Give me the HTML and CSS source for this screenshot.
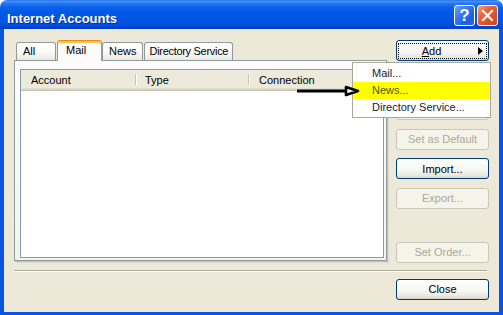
FILE: index.html
```html
<!DOCTYPE html>
<html lang="en">
<head>
    <meta charset="UTF-8">
    <title>Internet Accounts</title>
    <link rel="stylesheet" href="styles.css">
</head>
<body>

<div class="window">
    <div class="titlebar">
        <span class="title">Internet Accounts</span>
        <div class="caption-buttons">
            <span class="cap-btn cap-help">?</span>
            <span class="cap-btn cap-close">
                <svg width="19" height="19" viewBox="0 0 19 19">
                    <path d="M5 5 L14 14 M14 5 L5 14" stroke="#fff" stroke-width="2.2" stroke-linecap="square"/>
                </svg>
            </span>
        </div>
    </div>

    <div class="frame">
        <div class="main">
            <div class="tabarea">
                <div class="tabs">
                    <span class="tab">All</span>
                    <span class="tab active">Mail</span>
                    <span class="tab">News</span>
                    <span class="tab tab-dir">Directory Service</span>
                </div>
                <div class="panel">
                    <div class="listview">
                        <div class="list-header">
                            <span class="col col-account">Account</span>
                            <span class="col col-type">Type</span>
                            <span class="col col-conn">Connection</span>
                        </div>
                    </div>
                </div>
            </div>

            <div class="buttons">
                <button class="btn btn-add"><span class="focus"></span><span class="add-label"><u>A</u>dd</span><span class="tri"></span></button>
                <!-- Remove / Properties, hidden under the menu -->
                <button class="btn" disabled aria-label="Remove"></button>
                <button class="btn" disabled aria-label="Properties"></button>
                <button class="btn" disabled>Set as Default</button>
                <button class="btn">Import...</button>
                <button class="btn" disabled>Export...</button>
                <button class="btn btn-order" disabled>Set Order...</button>
            </div>
        </div>

        <div class="separator"></div>

        <div class="footer">
            <button class="btn">Close</button>
        </div>
    </div>

    <!-- popup menu of the Add button -->
    <div class="menu">
        <div class="menu-item">Mail...</div>
        <div class="menu-item highlight">News...</div>
        <div class="menu-item">Directory Service...</div>
    </div>

    <svg class="pointer" width="66" height="14" viewBox="0 0 66 14">
        <line x1="2" y1="7" x2="52" y2="7" stroke="#000" stroke-width="3"/>
        <polygon points="51,3 63,7 51,11" fill="#fff" stroke="#000" stroke-width="2.6" stroke-linejoin="round"/>
    </svg>
</div>

</body>
</html>
```

FILE: styles.css
```css
* {
    box-sizing: border-box;
}
body {
    margin: 0;
    background: #fff;
    font-family: "Liberation Sans", Arial, sans-serif;
    font-size: 11px;
    color: #000;
}
.window {
    position: relative;
    width: 503px;
    height: 315px;
    display: flex;
    flex-direction: column;
}
.titlebar {
    height: 29px;
    display: flex;
    align-items: flex-start;
    padding: 5px 5px 0 7px;
    border-radius: 7px 7px 0 0;
    background: linear-gradient(to bottom, #1a62e0 0, #4a94f8 1px, #2c7cf2 3px, #0a62ea 7px, #0056e6 14px, #0053e2 23px, #004ad6 26px, #003fc4 29px);
}
.title {
    flex: 1;
    align-self: center;
    padding-top: 2px;
    font-weight: bold;
    font-size: 13px;
    color: #fff;
    text-shadow: 1px 1px 0 #0a2a9a;
}
.caption-buttons {
    display: flex;
    gap: 2px;
}
.cap-btn {
    width: 21px;
    height: 21px;
    border: 1px solid #fff;
    border-radius: 3px;
    display: flex;
    align-items: center;
    justify-content: center;
    color: #fff;
}
.cap-help {
    background: linear-gradient(135deg, #6aa4fb 0%, #3a7cf2 35%, #1f5fe4 70%, #2a62dc 100%);
    font-weight: bold;
    font-size: 17px;
    line-height: 19px;
}
.cap-close {
    background: linear-gradient(135deg, #f4a080 0%, #e8643c 35%, #dc4e24 70%, #cc4824 100%);
}
.frame {
    flex: 1;
    background: #ece9d8;
    border: solid #0756e2;
    border-width: 0 4px 3px 4px;
    padding: 11px 10px 0 10px;
}
.main {
    display: flex;
    gap: 9px;
}
.tabarea {
    width: 373px;
}
.tabs {
    display: flex;
    align-items: flex-end;
    height: 20px;
    padding-left: 2px;
    position: relative;
    z-index: 1;
}
.tab {
    height: 18px;
    min-width: 40px;
    padding: 0 5px 0 6px;
    line-height: 16px;
    border: 1px solid #919b9c;
    border-bottom: none;
    border-radius: 3px 3px 0 0;
    background: linear-gradient(#fff, #fbfbfa 45%, #eae9e3);
}
.tab.active {
    height: 21px;
    min-width: 45px;
    margin: 0 0 -1px 1px;
    padding-left: 8px;
    line-height: 15px;
    border-top: 1px solid #e68b2c;
    box-shadow: inset 0 2px 0 #ffc83c;
    padding-top: 2px;
    background: #fcfcfe;
}
.tab-dir {
    margin-left: 1px;
    padding-left: 5px;
    padding-right: 4px;
    letter-spacing: -0.3px;
}
.panel {
    height: 201px;
    border: 1px solid #919b9c;
    background: linear-gradient(#fcfcfe, #f4f3ee);
    box-shadow: 1px 1px 0 #c4c1b4, 2px 2px 0 #dedbcf;
    padding: 8px 0 0 5px;
}
.listview {
    width: 364px;
    height: 189px;
    border: 1px solid #7f9db9;
    background: #fff;
}
.list-header {
    display: flex;
    height: 21px;
    background: linear-gradient(to bottom, #ebeadb 0, #ebeadb 18px, #e2decd 18px, #e2decd 19px, #d6d2c2 19px, #d6d2c2 20px, #cbc7b8 20px);
}
.col {
    position: relative;
    padding-left: 10px;
    line-height: 20px;
}
.col-account {
    width: 115px;
}
.col-type {
    width: 113px;
    padding-left: 9px;
}
.col-account::after,
.col-type::after {
    content: "";
    position: absolute;
    top: 4px;
    bottom: 6px;
    right: 0;
    width: 1px;
    background: #c7c5b2;
    box-shadow: 1px 0 0 #fff;
}
.buttons {
    display: flex;
    flex-direction: column;
    gap: 8.6px;
}
.btn {
    position: relative;
    width: 93px;
    height: 21px;
    padding: 0;
    font: inherit;
    color: #000;
    border: 1px solid #003c74;
    border-radius: 3px;
    background: linear-gradient(#fff, #f6f6f2 60%, #e6e4dc 90%, #d6d0c5);
}
.btn:disabled {
    color: #aca899;
    border-color: #c9c7ba;
    background: #f5f4ea;
}
.btn-add {
    display: flex;
    align-items: center;
    justify-content: center;
    padding-right: 22px;
}
.btn-add .focus {
    position: absolute;
    top: 2px;
    left: 1px;
    right: 1px;
    bottom: 1px;
    border: 1px dotted #000;
}
.btn-add .tri {
    position: absolute;
    right: 5px;
    top: 6px;
    border-left: 5px solid #000;
    border-top: 4px solid transparent;
    border-bottom: 4px solid transparent;
}
.btn-order {
    margin-top: 24px;
}
.separator {
    margin: 7px 2px 0 0;
    height: 2px;
    border-top: 1px solid #aca899;
    border-bottom: 1px solid #fff;
}
.footer {
    display: flex;
    justify-content: flex-end;
    margin-top: 7px;
}
.menu {
    position: absolute;
    left: 352px;
    top: 62px;
    width: 139px;
    padding: 2px 0 1px;
    border: 1px solid #aca899;
    background: #fff;
    z-index: 5;
}
.menu-item {
    height: 17px;
    line-height: 17px;
    padding-left: 19px;
    color: #1a1a2a;
}
.menu-item.highlight {
    background: #ffff00;
    color: #55550a;
}
.pointer {
    position: absolute;
    left: 295px;
    top: 84px;
    z-index: 6;
}
```
